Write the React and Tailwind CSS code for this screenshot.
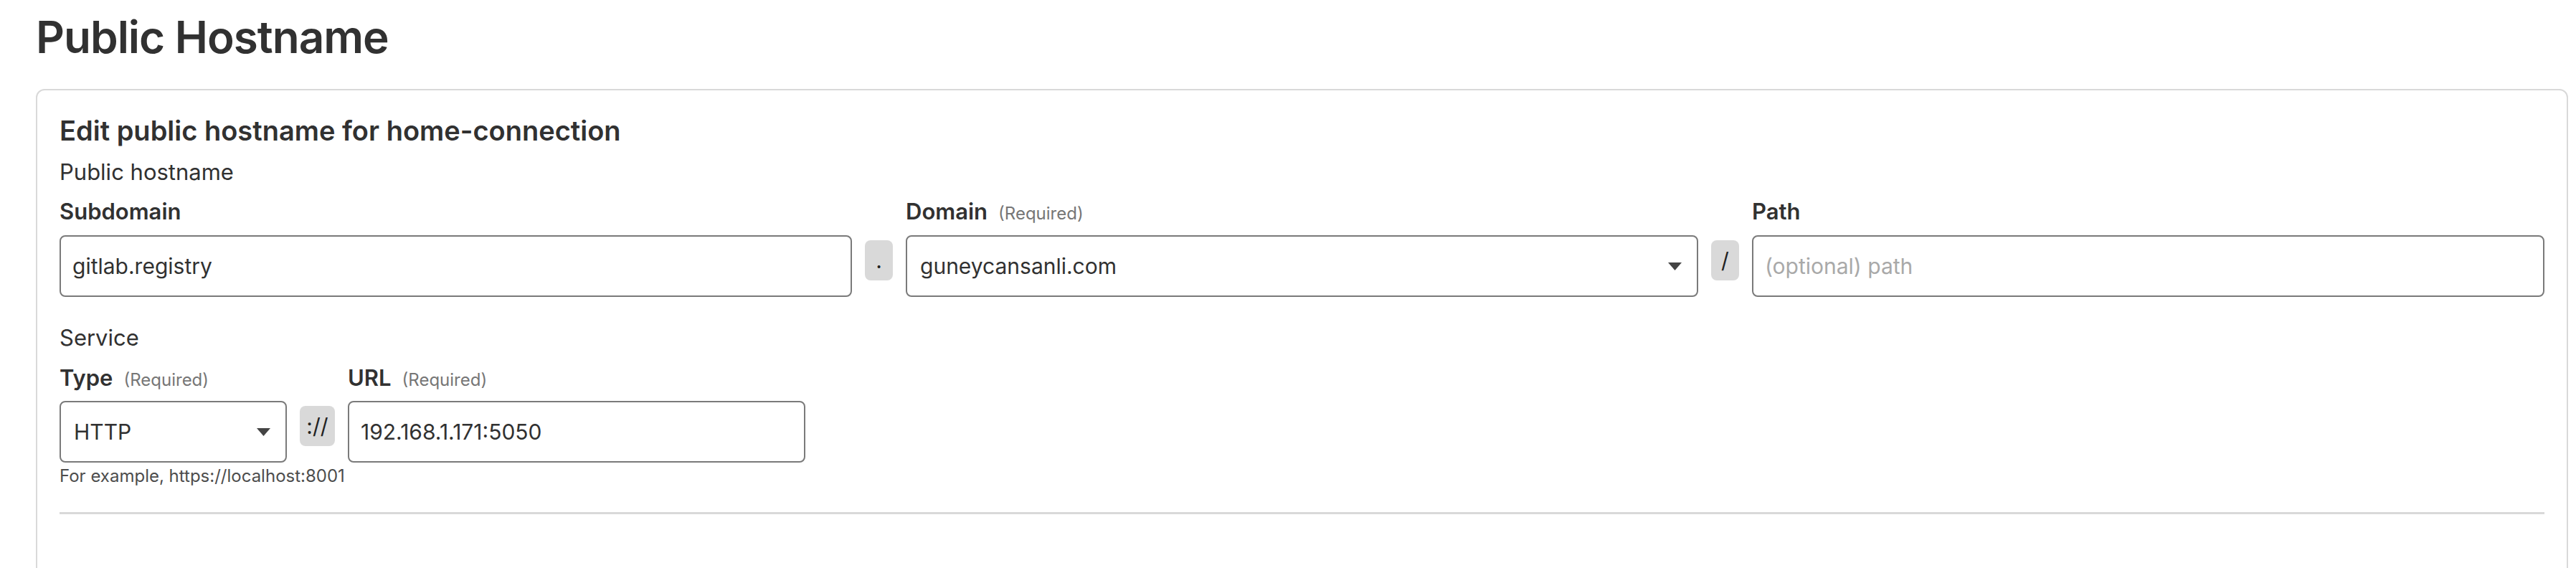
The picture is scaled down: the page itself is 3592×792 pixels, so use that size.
import React from "react";

const font = { fontFamily: "Inter, 'Noto Sans', sans-serif" };

const Caret = () => (
  <svg width="19" height="11" viewBox="0 0 19 11" className="shrink-0">
    <path d="M0 0 H19 L9.5 11 Z" fill="#444444" />
  </svg>
);

const Label = ({ children, required }) => (
  <div className="flex items-baseline h-[40px] leading-[40px]">
    <span className="text-[31px] font-semibold text-[#313131]">{children}</span>
    {required && (
      <span className="ml-[15px] text-[24px] text-[#767676]">(Required)</span>
    )}
  </div>
);

const Badge = ({ children }) => (
  <div className="mt-[7px] h-[56px] rounded-[8px] bg-[#d9d9d9] flex items-center justify-center text-[30px] text-[#222222]">
    {children}
  </div>
);

const TextBox = ({ value, placeholder }) => (
  <div className="h-[86px] rounded-[8px] border-2 border-[#7a7a7a] bg-white flex items-center px-[16px] text-[30px]">
    {value ? (
      <span className="text-[#313131]">{value}</span>
    ) : (
      <span className="text-[#a9a9a9]">{placeholder}</span>
    )}
  </div>
);

const SelectBox = ({ value }) => (
  <div className="h-[86px] rounded-[8px] border-2 border-[#7a7a7a] bg-white flex items-center justify-between pl-[18px] pr-[21px] text-[30px] text-[#313131]">
    <span>{value}</span>
    <Caret />
  </div>
);

export default function App() {
  return (
    <div className="min-h-[792px] bg-white pl-[50px] pr-[11px] pt-[14px]" style={font}>
      <h1 className="text-[62px] leading-[76px] font-semibold text-[#313131] tracking-[-1px]">
        Public Hostname
      </h1>

      <div className="mt-[34px] rounded-[12px] border-2 border-[#d9d9d9] px-[31px] pt-[33px] pb-[120px]">
        <h2 className="text-[38px] leading-[46px] font-semibold text-[#313131]">
          Edit public hostname for home-connection
        </h2>
        <div className="mt-[15px] text-[31px] leading-[40px] text-[#313131]">Public hostname</div>

        <div className="mt-[15px] grid grid-cols-[1fr_39px_1fr_39px_1fr] gap-x-[18px]">
          <Label>Subdomain</Label>
          <div />
          <Label required>Domain</Label>
          <div />
          <Label>Path</Label>

          <div className="mt-[13px]">
            <TextBox value="gitlab.registry" />
          </div>
          <div className="mt-[13px]">
            <Badge>.</Badge>
          </div>
          <div className="mt-[13px]">
            <SelectBox value="guneycansanli.com" />
          </div>
          <div className="mt-[13px]">
            <Badge>/</Badge>
          </div>
          <div className="mt-[13px]">
            <TextBox placeholder="(optional) path" />
          </div>
        </div>

        <div className="mt-[37px] text-[31px] leading-[40px] text-[#313131]">Service</div>

        <div className="mt-[16px] grid grid-cols-[317px_49px_638px] gap-x-[18px]">
          <Label required>Type</Label>
          <div />
          <Label required>URL</Label>

          <div className="mt-[12px]">
            <SelectBox value="HTTP" />
          </div>
          <div className="mt-[12px]">
            <Badge>://</Badge>
          </div>
          <div className="mt-[12px]">
            <TextBox value="192.168.1.171:5050" />
          </div>
        </div>

        <div className="mt-[5px] text-[24px] leading-[28px] text-[#4d4d4d]">
          For example, https://localhost:8001
        </div>

        <div className="mt-[36px] h-[3px] bg-[#d9d9d9]" />
      </div>
    </div>
  );
}
